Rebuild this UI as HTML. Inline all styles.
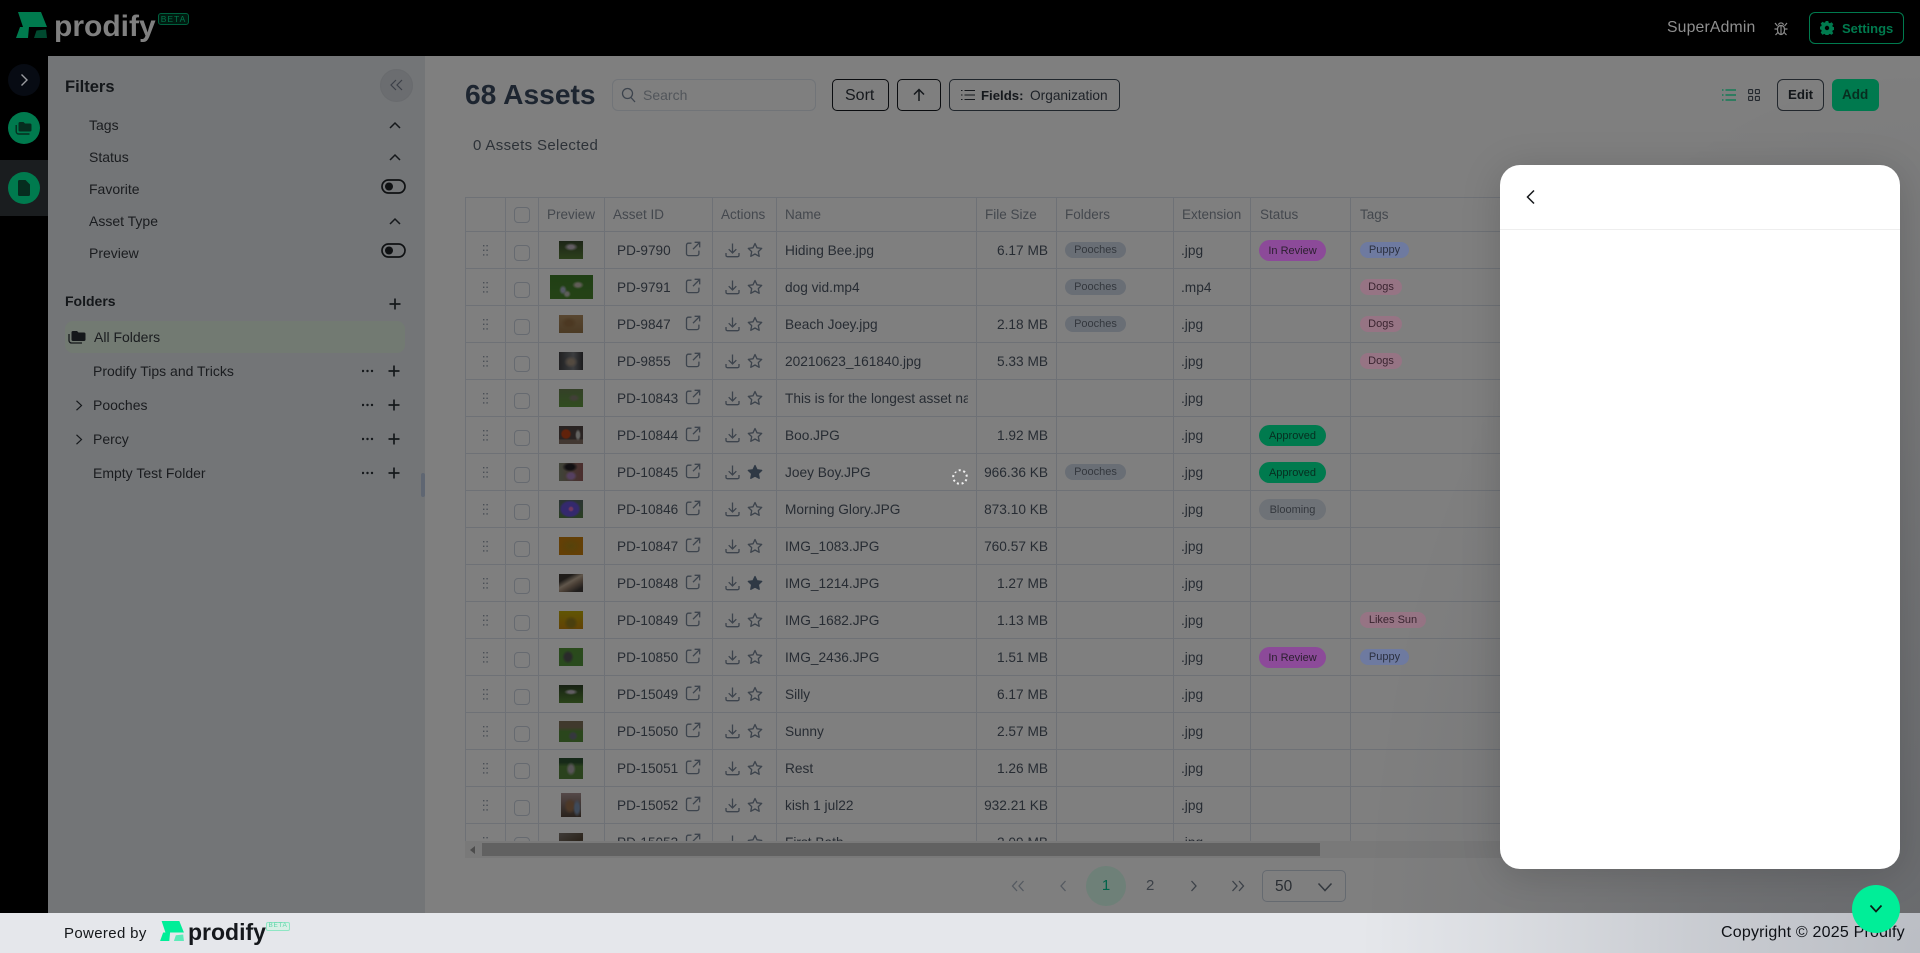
<!DOCTYPE html>
<html><head><meta charset="utf-8"><title>Prodify</title>
<style>
*{box-sizing:border-box}
html,body{margin:0;padding:0;width:1920px;height:953px;overflow:hidden;background:#000;font-family:"Liberation Sans",sans-serif}
.a,.a *{position:absolute}
#page{position:absolute;left:0;top:0;width:1920px;height:953px;overflow:hidden}
span,b{white-space:nowrap;line-height:1}
#filters{left:48px;top:56px;width:377px;height:857px;background:#737577}
#main{left:425px;top:56px;width:1495px;height:857px;background:#7f7f7f}
#foot{left:0;top:913px;width:1920px;height:40px;background:#e5e7eb}
.f{font-size:14px;color:#1a1c1f;left:89px}
.t{left:465px;top:197px;width:1035px;height:644px;overflow:hidden;border-top:1px solid #6e7176}
.v{top:0;width:1px;height:644px;background:#6e7176}
.h{top:10px;font-size:13.5px;color:#44484e}
.r{left:0;width:1035px;height:37px;border-bottom:1px solid #6e7176}
.g{left:18px;top:13px;width:5px;height:11px}
.c{left:49px;top:13px;width:16px;height:16px;border:1px solid #666a70;border-radius:4px}
.th{overflow:hidden;filter:brightness(.7)}
.id{left:152px;top:12px;font-size:13.6px;color:#272c33}
.e{left:220px;top:9px;width:16px;height:16px}
.d{left:260px;top:10px;width:15px;height:16px}
.s{left:282px;top:10px;width:16px;height:16px}
.n{left:320px;top:11px;width:183px;overflow:hidden;font-size:13.7px;color:#272c33;height:16px;line-height:16px}
.z{left:511px;top:12px;width:72px;text-align:right;font-size:13.7px;color:#272c33}
.x{left:716px;top:12px;font-size:13.7px;color:#272c33}
.p{height:16px;top:10px;border-radius:8px;font-size:11px;line-height:16px;text-align:center;color:#34383e;background:#696e75}
.st{left:794px;width:67px;height:21px;top:8px;line-height:22px;border-radius:11px}
.tg{left:895px}
.fo{left:600px;width:61px}
.rv{background:#8c4a99;color:#2c2030}
.ap{background:#007a4e;color:#062e20}
.bl{background:#6e7277}
.pu{background:#6e7aa0;width:49px;color:#2b3040}
.dg{background:#967484;width:42px;color:#3a2430}
.ls{background:#967484;width:66px;color:#3a2430}
.btn{top:79px;height:32px;border:1px solid #0a0c0f;border-radius:5px}
</style></head><body>
<svg width="0" height="0" style="position:absolute"><defs>
<symbol id="g" viewBox="0 0 5 11"><g fill="#4a4f56"><rect width="1.4" height="1.4" x="0" y="0"/><rect width="1.4" height="1.4" x="3.4" y="0"/><rect width="1.4" height="1.4" x="0" y="4.6"/><rect width="1.4" height="1.4" x="3.4" y="4.6"/><rect width="1.4" height="1.4" x="0" y="9.2"/><rect width="1.4" height="1.4" x="3.4" y="9.2"/></g></symbol>
<symbol id="e" viewBox="0 0 16 16"><path d="M6.5 2.2H3.4A1.9 1.9 0 0 0 1.5 4.1v8.6a1.9 1.9 0 0 0 1.9 1.9H12a1.9 1.9 0 0 0 1.9-1.9V9.6M8 8.2 14.6 1.5M9.6 1.3h5.1v5.1" fill="none" stroke="#3d444d" stroke-width="1.3"/></symbol>
<symbol id="d" viewBox="0 0 15 16"><path d="M7.5 1.5v9.3M3.7 7.2l3.8 3.8 3.8-3.8M1 11v2.3A1.4 1.4 0 0 0 2.400 14.700h10.200A1.400 1.400 0 0 0 14 13.300V11" fill="none" stroke="#3d444d" stroke-width="1.300"/></symbol>
<symbol id="s" viewBox="0 0 16 16"><path d="M8 1.500l2 4.300 4.700.6-3.400 3.200.9 4.700L8 12l-4.200 2.300.9-4.700L1.300 6.400l4.700-.6z" fill="none" stroke="#3d444d" stroke-width="1.300" stroke-linejoin="round"/></symbol>
<symbol id="sf" viewBox="0 0 16 16"><path d="M8 1.500l2 4.300 4.700.6-3.400 3.200.9 4.700L8 12l-4.200 2.300.9-4.700L1.300 6.400l4.700-.6z" fill="#2f3945" stroke="#2f3945" stroke-width="1.300" stroke-linejoin="round"/></symbol>
<symbol id="up" viewBox="0 0 12 8"><path d="M1 7l5-5 5 5" fill="none" stroke="#15181b" stroke-width="1.500"/></symbol>
<symbol id="tgl" viewBox="0 0 25 15"><rect x="1" y="1" width="23" height="13" rx="6.500" fill="none" stroke="#0f1113" stroke-width="1.700"/><circle cx="8" cy="7.500" r="4" fill="#0f1113"/></symbol>
<symbol id="act" viewBox="0 0 40 14"><g fill="#15181b"><circle cx="1" cy="7" r="1.200"/><circle cx="5.500" cy="7" r="1.200"/><circle cx="10" cy="7" r="1.200"/></g><path d="M32 1.500v11M26.500 7h11" stroke="#15181b" stroke-width="1.700" fill="none"/></symbol>
<symbol id="logo" viewBox="0 0 31 26"><path d="M2 0H25L31 15H13L12 26H0L4 15H7z" fill="currentColor"/><path d="M18 26 20.500 18.500 30 17.500 31 26z" fill="currentColor" opacity=".6"/></symbol>
</defs></svg>
<div id="page" class="a">
<!-- sidebar -->
<div style="left:0;top:160px;width:48px;height:56px;background:#1a1d1f"></div>
<div style="left:8px;top:64px;width:32px;height:32px;border-radius:50%;background:#070b13"></div>
<svg style="left:19px;top:73px" width="10" height="14" viewBox="0 0 10 14"><path d="M2.500 1.500 8 7l-5.500 5.500" fill="none" stroke="#9a9ca0" stroke-width="1.400"/></svg>
<div style="left:8px;top:112px;width:32px;height:32px;border-radius:50%;background:#007a4e"></div>
<svg style="left:15px;top:120px" width="18" height="16" viewBox="0 0 18 16"><path d="M3.500 3.500A1.500 1.500 0 0 1 5 2h3.500l1.500 1.500h5a1.500 1.500 0 0 1 1.500 1.500v5a1.500 1.500 0 0 1-1.500 1.500H5A1.500 1.500 0 0 1 3.500 10z" fill="#062d1f"/><path d="M1.200 5v6.500A2.500 2.500 0 0 0 3.700 14h10.800" fill="none" stroke="#062d1f" stroke-width="1.400"/></svg>
<div style="left:8px;top:172px;width:32px;height:32px;border-radius:50%;background:#007a4e"></div>
<svg style="left:18px;top:180px" width="12" height="16" viewBox="0 0 12 16"><path d="M1.500 0H7.500L12 4.500V14.500A1.500 1.500 0 0 1 10.500 16H1.500A1.500 1.500 0 0 1 0 14.500V1.500A1.500 1.500 0 0 1 1.500 0z" fill="#062d1f"/></svg>
<div style="left:8px;top:917px;width:32px;height:32px;border-radius:2px;background:radial-gradient(ellipse 9px 9px at 17px 10px,#a0a08c 60%,transparent 100%),radial-gradient(ellipse 12px 6px at 10px 20px,#8b7a60 70%,transparent 100%),linear-gradient(#3a4636,#46583e)"></div>
<!-- header -->
<svg style="left:16px;top:12px;color:#007a4e" width="31" height="26"><use href="#logo"/></svg>
<b style="left:54px;top:12px;font-size:30px;line-height:30px;color:#808080">prodify</b>
<div style="left:158px;top:13px;width:31px;height:12px;border:1px solid #00603e;border-radius:3px;background:#001a10"></div>
<span style="left:158px;top:14.500px;width:31px;text-align:center;font-size:8.500px;letter-spacing:1px;color:#00754b">BETA</span>
<span style="left:1667px;top:20px;font-size:15.800px;letter-spacing:.15px;color:#8f8f8f">SuperAdmin</span>
<svg style="left:1773px;top:20px" width="16" height="16" viewBox="0 0 16 16"><g fill="none" stroke="#8a8a8a" stroke-width="1.200"><path d="M8 5.500c2.400 0 3.500 1.600 3.500 4.200S10 14.500 8 14.500 4.500 12.300 4.500 9.700 5.600 5.500 8 5.500zM8 5.500v9M5.500 4.800a2.600 2.600 0 0 1 5 0M2 3l2.500 3M14 3l-2.500 3M1.500 9h3M14.500 9h-3M2.500 15l2.300-2.500M13.500 15l-2.300-2.500"/></g></svg>
<div style="left:1809px;top:12px;width:95px;height:32px;border:1px solid #007a4e;border-radius:6px"></div>
<svg style="left:1820px;top:21px" width="14" height="14" viewBox="0 0 14 14"><path d="M5.700 0h2.600l.4 1.800 1.200.5L11.500 1.300l1.800 1.800-1 1.600.5 1.200 1.800.4v2.600l-1.800.4-.5 1.200 1 1.600-1.800 1.800-1.600-1-1.200.5-.4 1.800H5.700l-.4-1.800-1.200-.5-1.600 1L.7 11.500l1-1.600-.5-1.200L-.6 8.300V5.700l1.800-.4.5-1.200-1-1.600L2.500 .7l1.600 1 1.200-.5z" fill="#007a4e"/><circle cx="7" cy="7" r="2.200" fill="#000"/></svg>
<b style="left:1842px;top:21.500px;font-size:13px;color:#007a4e">Settings</b>
<!-- filters -->
<div id="filters"></div>
<b style="left:65px;top:79px;font-size:16.500px;color:#14171a">Filters</b>
<div style="left:380px;top:69px;width:33px;height:33px;border-radius:50%;background:#6b6d70;border:1px solid #696b6e"></div>
<svg style="left:390px;top:79px" width="13" height="12" viewBox="0 0 13 12"><path d="M6 1 1 6l5 5M12 1 7 6l5 5" fill="none" stroke="#3c4048" stroke-width="1.200"/></svg>
<span class="f" style="top:118px">Tags</span><svg style="left:389px;top:121px" width="12" height="8"><use href="#up"/></svg>
<span class="f" style="top:150px">Status</span><svg style="left:389px;top:153px" width="12" height="8"><use href="#up"/></svg>
<span class="f" style="top:182px">Favorite</span><svg style="left:381px;top:179px" width="25" height="15"><use href="#tgl"/></svg>
<span class="f" style="top:214px">Asset Type</span><svg style="left:389px;top:217px" width="12" height="8"><use href="#up"/></svg>
<span class="f" style="top:246px">Preview</span><svg style="left:381px;top:243px" width="25" height="15"><use href="#tgl"/></svg>
<b style="left:65px;top:294px;font-size:14px;color:#14171a">Folders</b>
<svg style="left:389px;top:298px" width="12" height="12"><path d="M6 .5v11M.5 6h11" stroke="#15181b" stroke-width="1.700"/></svg>
<div style="left:65px;top:321px;width:340px;height:32px;border-radius:8px;background:#727a72"></div>
<svg style="left:68px;top:330px" width="18" height="14" viewBox="0 0 18 14"><path d="M3.500 2.500A1.500 1.500 0 0 1 5 1h4l1.500 1.500H16A1.500 1.500 0 0 1 17.500 4v5.500A1.500 1.500 0 0 1 16 11H5a1.500 1.500 0 0 1-1.500-1.500z" fill="#14171a"/><path d="M1 4v6.500A2.500 2.500 0 0 0 3.500 13H14" fill="none" stroke="#14171a" stroke-width="1.300"/></svg>
<span class="f" style="left:94px;top:330px">All Folders</span>
<span class="f" style="left:93px;top:364px">Prodify Tips and Tricks</span><svg style="left:362px;top:364px" width="40" height="14"><use href="#act"/></svg>
<span class="f" style="left:93px;top:398px">Pooches</span><svg style="left:362px;top:398px" width="40" height="14"><use href="#act"/></svg>
<span class="f" style="left:93px;top:432px">Percy</span><svg style="left:362px;top:432px" width="40" height="14"><use href="#act"/></svg>
<span class="f" style="left:93px;top:466px">Empty Test Folder</span><svg style="left:362px;top:466px" width="40" height="14"><use href="#act"/></svg>
<svg style="left:75px;top:400px" width="8" height="11" viewBox="0 0 8 11"><path d="M1.500 .8 6.500 5.500 1.500 10.200" fill="none" stroke="#15181b" stroke-width="1.200"/></svg>
<svg style="left:75px;top:434px" width="8" height="11" viewBox="0 0 8 11"><path d="M1.500 .8 6.500 5.500 1.500 10.200" fill="none" stroke="#15181b" stroke-width="1.200"/></svg>
<div style="left:421px;top:473px;width:4px;height:24px;background:#5f6672;border-radius:2px"></div>
<!-- main -->
<div id="main"></div>
<b style="left:465px;top:80px;font-size:28.200px;color:#1d2530">68 Assets</b>
<div style="left:612px;top:79px;width:204px;height:32px;border:1px solid #717478;border-radius:6px"></div>
<svg style="left:621px;top:87px" width="15" height="16" viewBox="0 0 15 16"><circle cx="6.500" cy="6.500" r="5" fill="none" stroke="#3d444d" stroke-width="1.300"/><path d="M10 10.500l4 4.500" stroke="#3d444d" stroke-width="1.300"/></svg>
<span style="left:643px;top:88px;font-size:14px;color:#52565b">Search</span>
<div class="btn" style="left:832px;width:57px"></div>
<span style="left:845px;top:88px;font-size:16px;color:#15181c">Sort</span>
<div class="btn" style="left:897px;width:44px"></div>
<svg style="left:912px;top:88px" width="14" height="14" viewBox="0 0 14 14"><path d="M7 13V1.500M2 6.500 7 1.500l5 5" fill="none" stroke="#15181c" stroke-width="1.500"/></svg>
<div class="btn" style="left:949px;width:171px;border-color:#20262c"></div>
<svg style="left:961px;top:89px" width="14" height="12" viewBox="0 0 14 12"><path d="M3.500 1.500H14M3.500 6H14M3.500 10.500H14M0 1.500h1.500M0 6h1.500M0 10.500h1.500" stroke="#15181c" stroke-width="1.100"/></svg>
<b style="left:981px;top:88.500px;font-size:13.200px;color:#15181c">Fields:</b>
<span style="left:1030px;top:88.500px;font-size:13.700px;color:#1d2127">Organization</span>
<span style="left:473px;top:138px;font-size:15px;letter-spacing:.35px;color:#2d3238">0 Assets Selected</span>
<svg style="left:1722px;top:89px" width="14" height="12" viewBox="0 0 14 12"><path d="M3.500 1H14M3.500 6H14M3.500 11H14M0 1h1.500M0 6h1.500M0 11h1.500" stroke="#007a4e" stroke-width="1.200"/></svg>
<svg style="left:1748px;top:89px" width="12" height="12" viewBox="0 0 12 12"><g fill="none" stroke="#22272d" stroke-width="1.100"><rect x=".6" y=".6" width="4" height="4" rx=".8"/><rect x="7.400" y=".6" width="4" height="4" rx=".8"/><rect x=".6" y="7.400" width="4" height="4" rx=".8"/><rect x="7.400" y="7.400" width="4" height="4" rx=".8"/></g></svg>
<div class="btn" style="left:1777px;width:47px;border-color:#22272d;border-radius:6px"></div>
<b style="left:1788px;top:88px;font-size:13.300px;color:#14171a">Edit</b>
<div style="left:1832px;top:79px;width:47px;height:32px;border-radius:6px;background:#007a4e"></div>
<b style="left:1842px;top:88px;font-size:13.500px;color:#072e20">Add</b>
<!-- table -->
<div class="t">
<div class="v" style="left:0"></div><div class="v" style="left:40px"></div><div class="v" style="left:73px"></div><div class="v" style="left:139px"></div><div class="v" style="left:247px"></div><div class="v" style="left:311px"></div><div class="v" style="left:511px"></div><div class="v" style="left:591px"></div><div class="v" style="left:708px"></div><div class="v" style="left:785px"></div><div class="v" style="left:885px"></div>
<div class="r" style="top:0;height:34px"></div>
<div class="c" style="top:9px"></div>
<span class="h" style="left:82px">Preview</span><span class="h" style="left:148px">Asset ID</span><span class="h" style="left:256px">Actions</span><span class="h" style="left:320px">Name</span><span class="h" style="left:520px">File Size</span><span class="h" style="left:600px">Folders</span><span class="h" style="left:717px">Extension</span><span class="h" style="left:795px">Status</span><span class="h" style="left:895px">Tags</span>

<div class="r" style="top:34px"><svg class="g"><use href="#g"/></svg><i class="c"></i><div class="th" style="left:94px;top:9px;width:24px;height:18px;background:radial-gradient(ellipse 7px 4px at 12px 6px,#8d858e 40%,transparent 100%),linear-gradient(#2a3622,#3e5a26)"></div><span class="id">PD-9790</span><svg class="e"><use href="#e"/></svg><svg class="d"><use href="#d"/></svg><svg class="s"><use href="#s"/></svg><span class="n">Hiding Bee.jpg</span><span class="z">6.17 MB</span><span class="p fo">Pooches</span><span class="x">.jpg</span><span class="p st rv">In Review</span><span class="p tg pu">Puppy</span></div>

<div class="r" style="top:71px"><svg class="g"><use href="#g"/></svg><i class="c"></i><div class="th" style="left:85px;top:6px;width:43px;height:24px;background:radial-gradient(ellipse 6px 4px at 28px 10px,#8a857c 40%,transparent 100%),radial-gradient(ellipse 4px 5px at 13px 15px,#7a7f8e 40%,transparent 100%),radial-gradient(ellipse 4px 4px at 17px 19px,#868680 40%,transparent 100%),linear-gradient(#2d5a1e,#35601f)"></div><span class="id">PD-9791</span><svg class="e"><use href="#e"/></svg><svg class="d"><use href="#d"/></svg><svg class="s"><use href="#s"/></svg><span class="n">dog vid.mp4</span><span class="p fo">Pooches</span><span class="x">.mp4</span><span class="p tg dg">Dogs</span></div>

<div class="r" style="top:108px"><svg class="g"><use href="#g"/></svg><i class="c"></i><div class="th" style="left:94px;top:9px;width:24px;height:18px;background:radial-gradient(ellipse 8px 6px at 10px 8px,#6c5030 40%,transparent 100%),linear-gradient(#7d6444,#6b5334)"></div><span class="id">PD-9847</span><svg class="e"><use href="#e"/></svg><svg class="d"><use href="#d"/></svg><svg class="s"><use href="#s"/></svg><span class="n">Beach Joey.jpg</span><span class="z">2.18 MB</span><span class="p fo">Pooches</span><span class="x">.jpg</span><span class="p tg dg">Dogs</span></div>

<div class="r" style="top:145px"><svg class="g"><use href="#g"/></svg><i class="c"></i><div class="th" style="left:94px;top:9px;width:24px;height:18px;background:radial-gradient(ellipse 7px 6px at 12px 10px,#76695c 40%,transparent 100%),linear-gradient(90deg,#2f2f31,#55575a 60%,#252528)"></div><span class="id">PD-9855</span><svg class="e"><use href="#e"/></svg><svg class="d"><use href="#d"/></svg><svg class="s"><use href="#s"/></svg><span class="n">20210623_161840.jpg</span><span class="z">5.33 MB</span><span class="x">.jpg</span><span class="p tg dg">Dogs</span></div>

<div class="r" style="top:182px"><svg class="g"><use href="#g"/></svg><i class="c"></i><div class="th" style="left:94px;top:9px;width:24px;height:18px;background:radial-gradient(ellipse 6px 4px at 15px 9px,#5e5a50 40%,transparent 100%),linear-gradient(#4a5c38,#456e2c)"></div><span class="id">PD-10843</span><svg class="e"><use href="#e"/></svg><svg class="d"><use href="#d"/></svg><svg class="s"><use href="#s"/></svg><span class="n">This is for the longest asset name ever</span><span class="x">.jpg</span></div>

<div class="r" style="top:219px"><svg class="g"><use href="#g"/></svg><i class="c"></i><div class="th" style="left:94px;top:9px;width:24px;height:18px;background:radial-gradient(circle 5.500px at 7px 8px,#8a3010 70%,transparent 100%),radial-gradient(ellipse 3px 6px at 19px 9px,#8f8f8c 50%,transparent 100%),linear-gradient(#3a3230 75%,#5e5048 76%)"></div><span class="id">PD-10844</span><svg class="e"><use href="#e"/></svg><svg class="d"><use href="#d"/></svg><svg class="s"><use href="#s"/></svg><span class="n">Boo.JPG</span><span class="z">1.92 MB</span><span class="x">.jpg</span><span class="p st ap">Approved</span></div>

<div class="r" style="top:256px"><svg class="g"><use href="#g"/></svg><i class="c"></i><div class="th" style="left:94px;top:9px;width:24px;height:18px;background:radial-gradient(ellipse 8px 5px at 11px 4px,#18161a 50%,transparent 100%),radial-gradient(ellipse 6px 5px at 12px 13px,#7a5c8a 50%,transparent 100%),linear-gradient(90deg,#5a6050,#6a4040)"></div><span class="id">PD-10845</span><svg class="e"><use href="#e"/></svg><svg class="d"><use href="#d"/></svg><svg class="s"><use href="#sf"/></svg><span class="n">Joey Boy.JPG</span><span class="z">966.36 KB</span><span class="p fo">Pooches</span><span class="x">.jpg</span><span class="p st ap">Approved</span></div>

<div class="r" style="top:293px"><svg class="g"><use href="#g"/></svg><i class="c"></i><div class="th" style="left:94px;top:9px;width:24px;height:18px;background:radial-gradient(circle 3px at 12px 9px,#a05088 50%,transparent 100%),radial-gradient(ellipse 11px 9px at 11px 9px,#4a3a9c 75%,transparent 100%),linear-gradient(#3d4a48,#3a5a30)"></div><span class="id">PD-10846</span><svg class="e"><use href="#e"/></svg><svg class="d"><use href="#d"/></svg><svg class="s"><use href="#s"/></svg><span class="n">Morning Glory.JPG</span><span class="z">873.10 KB</span><span class="x">.jpg</span><span class="p st bl">Blooming</span></div>

<div class="r" style="top:330px"><svg class="g"><use href="#g"/></svg><i class="c"></i><div class="th" style="left:94px;top:9px;width:24px;height:18px;background:radial-gradient(ellipse 12px 9px at 50% 50%,#7a6010,#8f5a08)"></div><span class="id">PD-10847</span><svg class="e"><use href="#e"/></svg><svg class="d"><use href="#d"/></svg><svg class="s"><use href="#s"/></svg><span class="n">IMG_1083.JPG</span><span class="z">760.57 KB</span><span class="x">.jpg</span></div>

<div class="r" style="top:367px"><svg class="g"><use href="#g"/></svg><i class="c"></i><div class="th" style="left:94px;top:9px;width:24px;height:18px;background:linear-gradient(150deg,#2c2824 25%,#8a7c6c 45%,#6a5a4c 60%,#2e2a28 85%)"></div><span class="id">PD-10848</span><svg class="e"><use href="#e"/></svg><svg class="d"><use href="#d"/></svg><svg class="s"><use href="#sf"/></svg><span class="n">IMG_1214.JPG</span><span class="z">1.27 MB</span><span class="x">.jpg</span></div>

<div class="r" style="top:404px"><svg class="g"><use href="#g"/></svg><i class="c"></i><div class="th" style="left:94px;top:9px;width:24px;height:18px;background:radial-gradient(circle 7px at 12px 12px,#6a5a14 50%,transparent 100%),linear-gradient(#8a7a04,#8a5e08)"></div><span class="id">PD-10849</span><svg class="e"><use href="#e"/></svg><svg class="d"><use href="#d"/></svg><svg class="s"><use href="#s"/></svg><span class="n">IMG_1682.JPG</span><span class="z">1.13 MB</span><span class="x">.jpg</span><span class="p tg ls">Likes Sun</span></div>

<div class="r" style="top:441px"><svg class="g"><use href="#g"/></svg><i class="c"></i><div class="th" style="left:94px;top:9px;width:24px;height:18px;background:radial-gradient(ellipse 6px 7px at 9px 9px,#3a3a3c 50%,transparent 100%),linear-gradient(#3c6a28,#3a6a2a)"></div><span class="id">PD-10850</span><svg class="e"><use href="#e"/></svg><svg class="d"><use href="#d"/></svg><svg class="s"><use href="#s"/></svg><span class="n">IMG_2436.JPG</span><span class="z">1.51 MB</span><span class="x">.jpg</span><span class="p st rv">In Review</span><span class="p tg pu">Puppy</span></div>

<div class="r" style="top:478px"><svg class="g"><use href="#g"/></svg><i class="c"></i><div class="th" style="left:94px;top:9px;width:24px;height:18px;background:radial-gradient(ellipse 7px 3px at 12px 7px,#8a858c 40%,transparent 100%),linear-gradient(#22301c,#3c6024)"></div><span class="id">PD-15049</span><svg class="e"><use href="#e"/></svg><svg class="d"><use href="#d"/></svg><svg class="s"><use href="#s"/></svg><span class="n">Silly</span><span class="z">6.17 MB</span><span class="x">.jpg</span></div>

<div class="r" style="top:515px"><svg class="g"><use href="#g"/></svg><i class="c"></i><div class="th" style="left:94px;top:8px;width:24px;height:21px;background:radial-gradient(ellipse 5px 5px at 14px 15px,#4c4f58 50%,transparent 100%),linear-gradient(#5c5240 30%,#3c6428 50%)"></div><span class="id">PD-15050</span><svg class="e"><use href="#e"/></svg><svg class="d"><use href="#d"/></svg><svg class="s"><use href="#s"/></svg><span class="n">Sunny</span><span class="z">2.57 MB</span><span class="x">.jpg</span></div>

<div class="r" style="top:552px"><svg class="g"><use href="#g"/></svg><i class="c"></i><div class="th" style="left:94px;top:8px;width:24px;height:21px;background:radial-gradient(ellipse 5px 7px at 12px 11px,#7e7a7c 45%,transparent 100%),linear-gradient(#1f3a22 20%,#3c5e2a 40%)"></div><span class="id">PD-15051</span><svg class="e"><use href="#e"/></svg><svg class="d"><use href="#d"/></svg><svg class="s"><use href="#s"/></svg><span class="n">Rest</span><span class="z">1.26 MB</span><span class="x">.jpg</span></div>

<div class="r" style="top:589px"><svg class="g"><use href="#g"/></svg><i class="c"></i><div class="th" style="left:96px;top:6px;width:20px;height:24px;background:radial-gradient(ellipse 4px 9px at 16px 15px,#5a6a80 50%,transparent 100%),radial-gradient(ellipse 6px 8px at 9px 13px,#6e5038 50%,transparent 100%),linear-gradient(#7a6868,#3a3028)"></div><span class="id">PD-15052</span><svg class="e"><use href="#e"/></svg><svg class="d"><use href="#d"/></svg><svg class="s"><use href="#s"/></svg><span class="n">kish 1 jul22</span><span class="z">932.21 KB</span><span class="x">.jpg</span></div>

<div class="r" style="top:626px"><svg class="g"><use href="#g"/></svg><i class="c"></i><div class="th" style="left:94px;top:9px;width:24px;height:18px;background:linear-gradient(150deg,#5a5450,#3e3428 60%,#5c564e)"></div><span class="id">PD-15053</span><svg class="e"><use href="#e"/></svg><svg class="d"><use href="#d"/></svg><svg class="s"><use href="#s"/></svg><span class="n">First Bath</span><span class="z">2.09 MB</span><span class="x">.jpg</span></div>
</div>
<!-- scrollbar -->
<div style="left:465px;top:841px;width:1040px;height:17px;background:#797979"></div>
<svg style="left:470px;top:846px" width="6" height="8"><path d="M5 0v8L0 4z" fill="#4c4c4c"/></svg>
<div style="left:482px;top:843px;width:838px;height:13px;background:#616161"></div>
<!-- spinner -->
<svg style="left:951px;top:468px" width="18" height="18" viewBox="0 0 18 18"><circle cx="9" cy="9" r="6.800" fill="none" stroke="#f0f0f0" stroke-width="2" stroke-dasharray="2 2.700" transform="rotate(-60 9 9)"/><path d="M2.500 3.500 5 1" stroke="#7f7f7f" stroke-width="3"/></svg>
<!-- pagination -->
<svg style="left:1011px;top:880px" width="14" height="12" viewBox="0 0 14 12"><path d="M6 1 1.500 6 6 11M12.500 1 8 6l4.500 5" fill="none" stroke="#555a61" stroke-width="1.300"/></svg>
<svg style="left:1059px;top:880px" width="8" height="12" viewBox="0 0 8 12"><path d="M6.500 1 2 6l4.500 5" fill="none" stroke="#555a61" stroke-width="1.300"/></svg>
<div style="left:1086px;top:866px;width:40px;height:40px;border-radius:50%;background:#6e8078"></div>
<span style="left:1086px;top:878px;width:40px;text-align:center;font-size:15px;color:#00634a">1</span>
<span style="left:1146px;top:878px;font-size:15px;color:#3c4148">2</span>
<svg style="left:1190px;top:880px" width="8" height="12" viewBox="0 0 8 12"><path d="M1.500 1 6 6l-4.500 5" fill="none" stroke="#3c4148" stroke-width="1.300"/></svg>
<svg style="left:1231px;top:880px" width="14" height="12" viewBox="0 0 14 12"><path d="M1.500 1 6 6l-4.500 5M8 1l4.500 5L8 11" fill="none" stroke="#3c4148" stroke-width="1.300"/></svg>
<div style="left:1262px;top:870px;width:84px;height:32px;border:1px solid #656a70;border-radius:5px"></div>
<span style="left:1275px;top:879px;font-size:15.500px;color:#2a2e33">50</span>
<svg style="left:1317px;top:882px" width="16" height="10" viewBox="0 0 16 10"><path d="M1.500 1.500 8 8.500l6.500-7" fill="none" stroke="#33383e" stroke-width="1.500"/></svg>
<!-- footer -->
<div id="foot"></div>
<span style="left:64px;top:926px;font-size:15px;letter-spacing:.35px;color:#14171a">Powered by</span>
<svg style="left:160px;top:921px;color:#00ee98" width="24" height="20"><use href="#logo"/></svg>
<b style="left:188px;top:921px;font-size:23px;line-height:23px;color:#15181c">prodify</b>
<div style="left:266px;top:922px;width:24px;height:9px;border:1px solid #8fe6c4;border-radius:2px;background:#d8efe6"></div>
<span style="left:266px;top:923px;width:24px;text-align:center;font-size:6.500px;letter-spacing:.6px;color:#5cd4a8">BETA</span>
<span style="left:1721px;top:925px;font-size:16px;letter-spacing:.2px;color:#0d0f12">Copyright © 2025 Prodify</span>
<!-- glow -->
<div style="left:1360px;top:60px;width:560px;height:893px;background:radial-gradient(ellipse farthest-side at 100% 100%,rgba(16,24,40,.2),rgba(16,24,40,.13) 40%,rgba(16,24,40,.05) 75%,rgba(16,24,40,0))"></div>
<!-- modal -->
<div style="left:1500px;top:165px;width:400px;height:704px;background:#fff;border-radius:20px;overflow:hidden;box-shadow:0 5px 40px rgba(0,0,0,.16)">
<div style="left:0;top:0;width:400px;height:65px;border-bottom:1px solid #eeeeee"></div>
<svg style="left:25px;top:24px" width="12" height="16" viewBox="0 0 12 16"><path d="M9 1.500 2.500 8 9 14.500" fill="none" stroke="#16181b" stroke-width="1.500"/></svg>
</div>
<!-- fab -->
<div style="left:1852px;top:885px;width:48px;height:48px;border-radius:50%;background:#00ee98"></div>
<svg style="left:1869px;top:904px" width="14" height="10" viewBox="0 0 14 10"><path d="M1.500 1.500 7 7.500l5.500-6" fill="none" stroke="#0c1a14" stroke-width="1.700"/></svg>
</div>
</body></html>
